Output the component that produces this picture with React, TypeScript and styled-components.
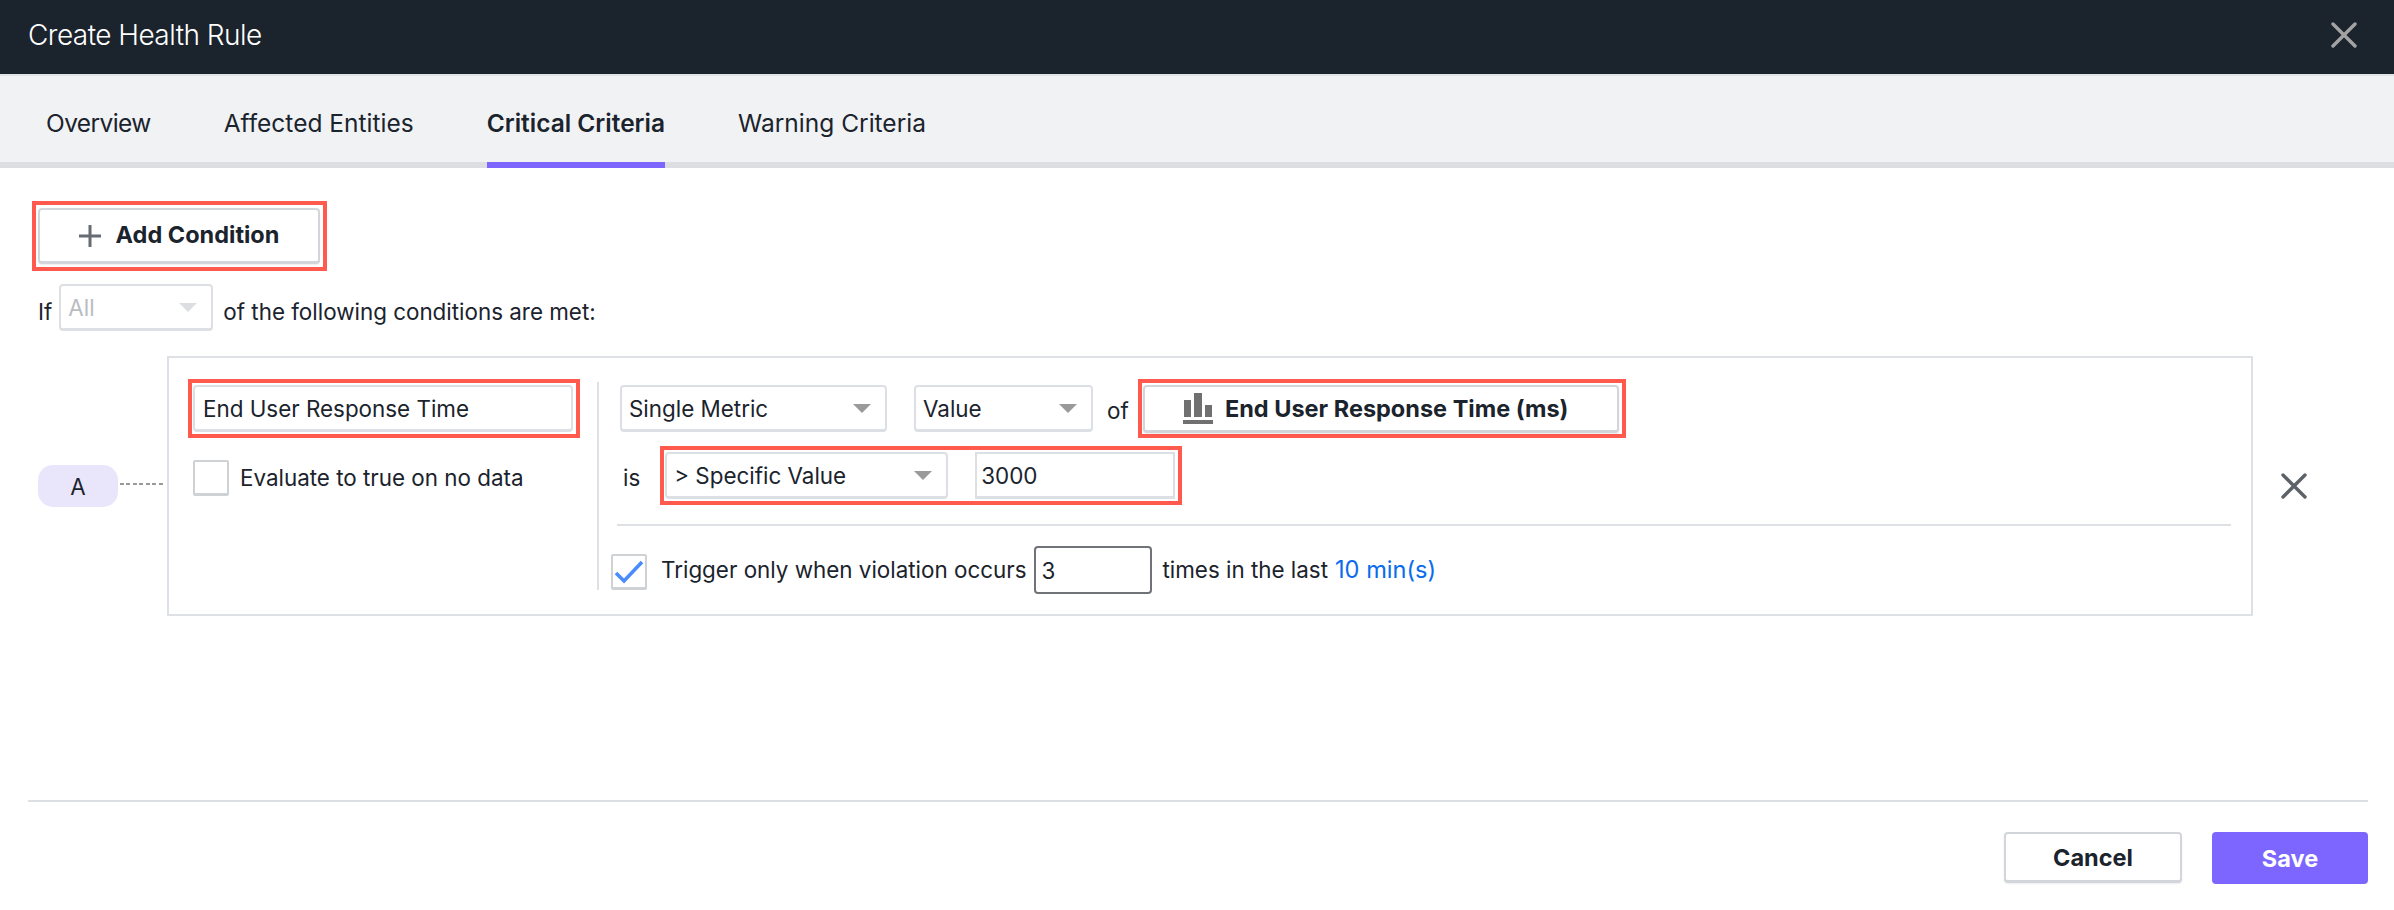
import React from "react";
import styled, { createGlobalStyle } from "styled-components";

const Global = createGlobalStyle`
  html, body { margin: 0; padding: 0; background: #fff; }
  body { font-family: Inter, "Liberation Sans", sans-serif; color: #1b232d; -webkit-font-smoothing: antialiased; }
  * { box-sizing: border-box; }
`;

const Page = styled.div`
  width: 2394px;
  height: 910px;
  display: flex;
  flex-direction: column;
  overflow: hidden;
`;
const Header = styled.header`
  height: 76px;
  flex: none;
  display: flex;
  align-items: center;
  justify-content: space-between;
  padding: 0 37px 4px 28px;
  background: #1b232d;
  border-bottom: 2px solid #e1e3e6;
`;
const Title = styled.h1`
  margin: 0;
  font-size: 28px;
  font-weight: 300;
  letter-spacing: -0.55px;
  color: #fff;
`;
const Tabs = styled.nav`
  height: 92px;
  flex: none;
  display: flex;
  gap: 73px;
  padding-left: 46px;
  background: #f1f2f4;
  border-bottom: 6px solid #dcdee1;
`;
const Tab = styled.div<{ $active?: boolean; $tight?: boolean }>`
  height: 92px;
  padding-top: 31px;
  font-size: 24.5px;
  line-height: 32px;
  letter-spacing: ${(p) => (p.$tight ? "-0.6px" : "0")};
  font-weight: ${(p) => (p.$active ? 600 : 400)};
  color: #1b232d;
  border-bottom: 6px solid ${(p) => (p.$active ? "#7d66ff" : "transparent")};
`;
const Body = styled.main`
  flex: 1;
  display: flex;
  flex-direction: column;
  padding: 33px 26px 26px 28px;
`;
const Highlight = styled.div<{ $gap?: number }>`
  display: flex;
  flex: none;
  align-items: center;
  gap: ${(p) => p.$gap ?? 0}px;
  width: fit-content;
  height: 70px;
  padding: 0 3px 0 2px;
  border: 4px solid #ff5a4d;
`;
const SmallHighlight = styled(Highlight)<{ $ml: number }>`
  height: 59px;
  padding: 0 3px 0 1px;
  margin-left: ${(p) => p.$ml}px;
`;
const AddWrap = styled(Highlight)`
  margin-left: 4px;
`;
const BaseButton = styled.button`
  display: flex;
  align-items: center;
  justify-content: center;
  background: #fff;
  border: 2px solid #d2d6da;
  border-bottom-width: 3px;
  border-radius: 4px;
  font-family: inherit;
  font-weight: 700;
  font-size: 23.5px;
  color: #1b232d;
  box-shadow: 0 1px 2px rgba(0, 0, 0, 0.08);
  padding: 0;
`;
const AddButton = styled(BaseButton)`
  width: 282px;
  height: 56px;
  gap: 15px;
`;
const AddLabel = styled.span`
  margin-bottom: 3px;
`;
const MetricButton = styled(BaseButton)`
  width: 476px;
  height: 48px;
  gap: 12px;
  padding-right: 10px;
`;
const ConditionLine = styled.div`
  display: flex;
  align-items: center;
  height: 47px;
  margin: 13px 0 0 10px;
`;
const Text = styled.span<{ $drop?: number; $ml?: number }>`
  font-size: 22.4px;
  line-height: 30px;
  white-space: nowrap;
  margin-top: ${(p) => p.$drop ?? 0}px;
  margin-left: ${(p) => p.$ml ?? 0}px;
`;
const Link = styled.span`
  color: #0a6ced;
  margin-left: 7px;
  font-size: 23.6px;
`;
const Select = styled.div<{ $w: number; $ml?: number; $disabled?: boolean }>`
  width: ${(p) => p.$w}px;
  height: 47px;
  flex: none;
  display: flex;
  align-items: center;
  justify-content: space-between;
  margin-left: ${(p) => p.$ml ?? 0}px;
  padding: 0 14px 0 7px;
  background: #fff;
  border: 2px solid #dcdfe3;
  border-bottom-width: 3px;
  border-radius: 4px;
  font-size: 22.4px;
  color: ${(p) => (p.$disabled ? "#b9bcc0" : "#1b232d")};
`;
const Arrow = styled.i<{ $disabled?: boolean }>`
  width: 0;
  height: 0;
  border-left: 9px solid transparent;
  border-right: 9px solid transparent;
  border-top: 9px solid ${(p) => (p.$disabled ? "#dcdee1" : "#9a9a9a")};
`;
const ConditionRow = styled.section`
  display: flex;
  align-items: flex-start;
  margin: 25px 0 0 10px;
`;
const Pill = styled.div`
  width: 80px;
  height: 42px;
  margin-top: 109px;
  flex: none;
  display: flex;
  align-items: center;
  justify-content: center;
  background: #e9e6fc;
  border-radius: 15px;
  font-size: 22.4px;
`;
const Dashes = styled.div`
  width: 45px;
  height: 2px;
  margin: 127px 2px 0;
  flex: none;
  background: repeating-linear-gradient(to right, #999 0 4px, transparent 4px 6.5px);
`;
const Panel = styled.div`
  width: 2086px;
  height: 260px;
  flex: none;
  display: flex;
  align-items: flex-start;
  padding-top: 21px;
  border: 2px solid #dde0e4;
`;
const LeftCol = styled.div`
  width: 428px;
  flex: none;
  padding-left: 19px;
`;
const NameInput = styled.div`
  width: 380px;
  height: 47px;
  display: flex;
  align-items: center;
  padding: 0 8px;
  border: 2px solid #dcdfe3;
  border-bottom-width: 3px;
  border-radius: 4px;
  font-size: 22.4px;
`;
const CheckRow = styled.div`
  display: flex;
  align-items: center;
  gap: 11px;
  margin: 22px 0 0 5px;
`;
const Box = styled.div`
  width: 36px;
  height: 36px;
  flex: none;
  background: #fff;
  border: 2px solid #cfd2d5;
  border-bottom-width: 3px;
  border-radius: 2px;
  display: flex;
`;
const Divider = styled.div`
  width: 2px;
  height: 208px;
  flex: none;
  margin-top: 3px;
  background: #dde0e4;
`;
const RightCol = styled.div`
  flex: 1;
  min-width: 0;
`;
const Row = styled.div<{ $pl: number; $mt?: number; $h?: number }>`
  display: flex;
  align-items: center;
  height: ${(p) => p.$h ?? 59}px;
  padding-left: ${(p) => p.$pl}px;
  margin-top: ${(p) => p.$mt ?? 0}px;
`;
const NumberInput = styled.div<{ $w: number }>`
  width: ${(p) => p.$w}px;
  height: 47px;
  flex: none;
  display: flex;
  align-items: center;
  padding-left: 4px;
  border: 2px solid #dcdfe3;
  border-bottom-width: 3px;
  font-size: 22.4px;
`;
const Rule = styled.div`
  height: 2px;
  margin: 19px 20px 0 18px;
  background: #dde0e4;
`;
const CountInput = styled.div`
  width: 118px;
  height: 48px;
  flex: none;
  display: flex;
  align-items: center;
  padding-left: 5px;
  margin: 0 10px 0 8px;
  border: 2px solid #6f7276;
  border-radius: 4px;
  font-size: 22.4px;
`;
const CheckedBox = styled(Box)`
  margin: 4px 14px 0 0;
`;
const CloseIcon = styled.svg`
  flex: none;
  margin: 117px 0 0 28px;
`;
const HeaderClose = styled.svg`
  flex: none;
`;
const Footer = styled.footer`
  margin-top: 184px;
  border-top: 2px solid #dcdfe3;
  padding-top: 30px;
  display: flex;
  justify-content: flex-end;
  gap: 30px;
  width: 2340px;
`;
const Cancel = styled(BaseButton)`
  width: 178px;
  height: 51px;
`;
const Save = styled.button`
  width: 156px;
  height: 52px;
  border: 0;
  border-radius: 4px;
  background: #7d66ff;
  color: #fff;
  font-family: inherit;
  font-size: 23.5px;
  font-weight: 700;
`;

const X = ({ color }: { color: string }) => (
  <path d="M2 2 L24 24 M24 2 L2 24" stroke={color} strokeWidth={3.4} strokeLinecap="round" fill="none" />
);

export default function App() {
  return (
    <Page>
      <Global />
      <Header>
        <Title>Create Health Rule</Title>
        <HeaderClose width="26" height="26" viewBox="0 0 26 26">
          <X color="#a3a3a3" />
        </HeaderClose>
      </Header>
      <Tabs>
        <Tab $tight>Overview</Tab>
        <Tab>Affected Entities</Tab>
        <Tab $active>Critical Criteria</Tab>
        <Tab>Warning Criteria</Tab>
      </Tabs>
      <Body>
        <AddWrap>
          <AddButton>
            <svg width="22" height="24" viewBox="0 0 22 24">
              <path d="M11 1 V23 M0 12 H22" stroke="#666c72" strokeWidth="3" fill="none" />
            </svg>
            <AddLabel>Add Condition</AddLabel>
          </AddButton>
        </AddWrap>
        <ConditionLine>
          <Text $drop={9}>If</Text>
          <Select $w={154} $ml={7} $disabled>
            All
            <Arrow $disabled />
          </Select>
          <Text $drop={9} $ml={10}>of the following conditions are met:</Text>
        </ConditionLine>
        <ConditionRow>
          <Pill>A</Pill>
          <Dashes />
          <Panel>
            <LeftCol>
              <SmallHighlight $ml={0}>
                <NameInput>End User Response Time</NameInput>
              </SmallHighlight>
              <CheckRow>
                <Box />
                <Text>Evaluate to true on no data</Text>
              </CheckRow>
            </LeftCol>
            <Divider />
            <RightCol>
              <Row $pl={21}>
                <Select $w={267}>
                  Single Metric
                  <Arrow />
                </Select>
                <Select $w={179} $ml={27}>
                  Value
                  <Arrow />
                </Select>
                <Text $drop={4} $ml={14}>of</Text>
                <SmallHighlight $ml={9}>
                  <MetricButton>
                    <svg width="30" height="31" viewBox="0 0 30 31">
                      <path d="M1 7 H8 V24 H1 Z M11 0 H19 V24 H11 Z M22 12 H29 V24 H22 Z M0 27 H30 V31 H0 Z" fill="#707070" />
                    </svg>
                    End User Response Time (ms)
                  </MetricButton>
                </SmallHighlight>
              </Row>
              <Row $pl={24} $mt={8}>
                <Text $drop={4}>is</Text>
                <SmallHighlight $gap={27} $ml={20}>
                  <Select $w={283}>
                    &gt; Specific Value
                    <Arrow />
                  </Select>
                  <NumberInput $w={200}>3000</NumberInput>
                </SmallHighlight>
              </Row>
              <Rule />
              <Row $pl={12} $mt={20} $h={48}>
                <CheckedBox>
                  <svg width="32" height="31" viewBox="0 0 32 31">
                    <path d="M3 17 L11 25 L29 6" stroke="#4a8cff" strokeWidth="3.6" fill="none" />
                  </svg>
                </CheckedBox>
                <Text>Trigger only when violation occurs</Text>
                <CountInput>3</CountInput>
                <Text>
                  times in the last<Link>10 min(s)</Link>
                </Text>
              </Row>
            </RightCol>
          </Panel>
          <CloseIcon width="26" height="26" viewBox="0 0 26 26">
            <X color="#5c6268" />
          </CloseIcon>
        </ConditionRow>
        <Footer>
          <Cancel>Cancel</Cancel>
          <Save>Save</Save>
        </Footer>
      </Body>
    </Page>
  );
}
